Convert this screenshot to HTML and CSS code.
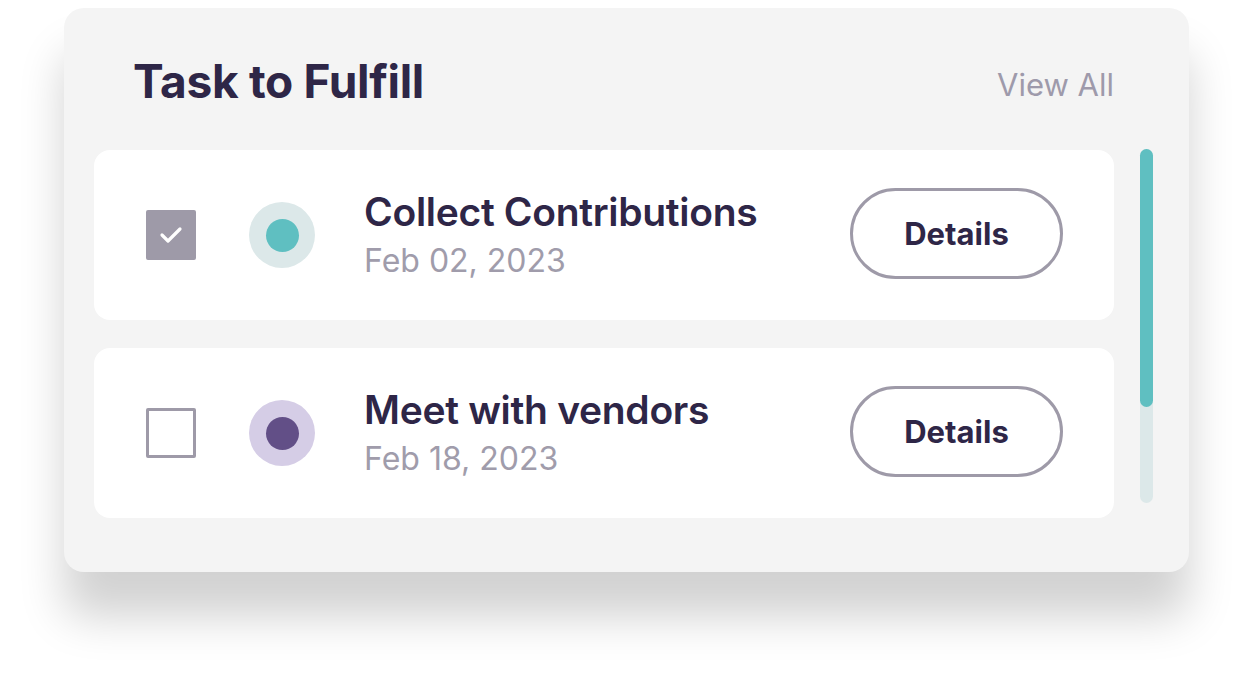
FILE: index.html
```html
<!DOCTYPE html>
<html lang="en">
<head>
    <meta charset="UTF-8">
    <title>Task to Fulfill</title>
    <meta name="viewport" content="width=device-width, initial-scale=1.0">
    <link rel="stylesheet" href="styles.css">
</head>
<body>

    <div class="card">
        <div class="card-header">
            <h1>Task to Fulfill</h1>
            <a href="#" class="view-all">View All</a>
        </div>

        <div class="card-body">
            <div class="task-list">
                <div class="task">
                    <span class="check checked">
                        <svg width="26" height="20" viewBox="0 0 26 20"><path d="M4 10 L10 16 L22 4" fill="none" stroke="#fff" stroke-width="3.2" stroke-linecap="round" stroke-linejoin="round"/></svg>
                    </span>
                    <span class="dot teal"><span></span></span>
                    <div class="task-info">
                        <div class="task-name">Collect Contributions</div>
                        <div class="task-date">Feb 02, 2023</div>
                    </div>
                    <button class="details">Details</button>
                </div>

                <div class="task">
                    <span class="check"></span>
                    <span class="dot purple"><span></span></span>
                    <div class="task-info">
                        <div class="task-name">Meet with vendors</div>
                        <div class="task-date">Feb 18, 2023</div>
                    </div>
                    <button class="details">Details</button>
                </div>
            </div>

            <div class="scrollbar">
                <div class="thumb"></div>
            </div>
        </div>
    </div>

</body>
</html>
```

FILE: styles.css
```css
html, body {
    height: 100%;
}
body {
    margin: 0;
    background: #ffffff;
    font-family: Inter, 'Noto Sans', sans-serif;
    padding: 8px 0 0 64px;
    box-sizing: border-box;
    min-height: 692px;
    overflow: hidden;
}
.card {
    width: 1125px;
    height: 564px;
    box-sizing: border-box;
    background: #f4f4f4;
    border-radius: 20px;
    padding: 0 36px 0 30px;
    box-shadow: 0 45px 45px rgba(0, 0, 0, 0.18);
}
.card-header {
    height: 142px;
    display: flex;
    align-items: center;
    justify-content: space-between;
    padding: 4px 39px 0 39px;
    box-sizing: border-box;
}
h1 {
    margin: 0;
    font-size: 46px;
    font-weight: 700;
    color: #2e2647;
    letter-spacing: -0.3px;
}
.view-all {
    font-size: 31px;
    color: #9e9aab;
    text-decoration: none;
    margin-top: 6px;
}
.card-body {
    display: flex;
}
.task-list {
    flex: 1;
    display: flex;
    flex-direction: column;
    gap: 28px;
}
.task {
    height: 170px;
    background: white;
    border-radius: 16px;
    display: flex;
    align-items: center;
    padding: 0 51px 0 52px;
}
.check {
    width: 50px;
    height: 50px;
    box-sizing: border-box;
    border: 3px solid #9e9aa8;
    border-radius: 2px;
    display: flex;
    align-items: center;
    justify-content: center;
    flex-shrink: 0;
}
.check.checked {
    background: #9e9aa8;
}
.dot {
    width: 66px;
    height: 66px;
    border-radius: 50%;
    margin-left: 53px;
    display: flex;
    align-items: center;
    justify-content: center;
    flex-shrink: 0;
}
.dot span {
    width: 33px;
    height: 33px;
    border-radius: 50%;
}
.dot.teal { background: #dce8e9; }
.dot.teal span { background: #5fbfc1; }
.dot.purple { background: #d5cde6; }
.dot.purple span { background: #624f87; }
.task-info {
    flex: 1;
    margin-left: 49px;
    margin-bottom: 0;
}
.task-name {
    font-size: 39px;
    font-weight: 600;
    color: #2e2647;
    letter-spacing: -0.3px;
    line-height: 46px;
}
.task-date {
    font-size: 32px;
    color: #a09cab;
    line-height: 40px;
    margin-top: 6px;
}
.details {
    width: 213px;
    height: 91px;
    margin-top: -4px;
    background: white;
    border: 3px solid #9e9aa8;
    border-radius: 46px;
    font-family: inherit;
    font-size: 31px;
    font-weight: 700;
    color: #2e2647;
    cursor: pointer;
}
.scrollbar {
    width: 13px;
    height: 354px;
    margin-left: 26px;
    margin-top: -1px;
    background: #dce8e9;
    border-radius: 7px;
}
.thumb {
    height: 258px;
    background: #5fbfc1;
    border-radius: 7px;
}
```
